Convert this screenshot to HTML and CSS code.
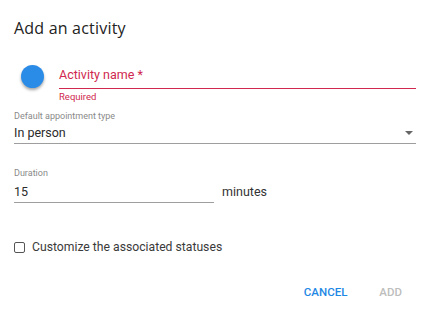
FILE: index.html
```html
<!DOCTYPE html>
<html lang="en">
  <head>
    <meta charset="UTF-8" />
    <title>Add an activity</title>
    <link rel="stylesheet" href="styles.css">
  </head>
  <body>
    <div class="dialog">
      <h2 class="dialog-title">Add an activity</h2>
      <div class="name-row">
        <span class="color-dot"></span>
        <div class="field field-error">
          <div class="field-input">Activity name *</div>
          <div class="field-help">Required</div>
        </div>
      </div>
      <div class="field select-field">
        <label class="field-label">Default appointment type</label>
        <div class="field-input">
          <span>In person</span>
          <span class="caret"></span>
        </div>
      </div>
      <div class="duration-row">
        <div class="field duration-field">
          <label class="field-label">Duration</label>
          <div class="field-input">15</div>
        </div>
        <span class="unit">minutes</span>
      </div>
      <label class="check">
        <span class="check-box"></span>
        Customize the associated statuses
      </label>
      <div class="actions">
        <button class="btn btn-primary">Cancel</button>
        <button class="btn btn-disabled">Add</button>
      </div>
    </div>
  </body>
</html>
```

FILE: styles.css
```css
body {
  margin: 0;
  background-color: #fff;
  font-family: Roboto, Arial, sans-serif;
  color: #2b2b2b;
}

.dialog {
  width: 428px;
  height: 313px;
  padding: 18px 12px 0 14px;
  box-sizing: border-box;
}

.dialog-title {
  margin: 0;
  font-family: "Open Sans", Lato, sans-serif;
  font-size: 16px;
  font-weight: 500;
  letter-spacing: 0.2px;
  color: #222;
  line-height: 20px;
}

.name-row {
  display: flex;
  align-items: flex-start;
  margin-top: 27px;
}

.color-dot {
  width: 23px;
  height: 23px;
  border-radius: 50%;
  background-color: #2b8ce8;
  box-shadow: 0 2px 3px rgba(0, 0, 0, 0.35);
  margin: 0 15px 0 7px;
  flex-shrink: 0;
}

.field {
  flex: 1;
}

.field-input {
  font-size: 12.5px;
  line-height: 18px;
  padding: 2px 0 4px;
  border-bottom: 1px solid #9e9e9e;
  display: flex;
  justify-content: space-between;
  align-items: center;
}

.field-error .field-input {
  padding: 1px 0 4px;
  color: #d0284f;
  border-bottom-color: #d0284f;
}

.field-help {
  font-size: 9.5px;
  color: #d0284f;
  margin-top: 3px;
  line-height: 10px;
}

.field-label {
  display: block;
  font-size: 9px;
  color: #8a8a8a;
  line-height: 12px;
}

.select-field {
  margin-top: 8px;
}

.select-field .field-input {
  padding: 2px 0 1px;
}

.caret {
  width: 0;
  height: 0;
  border-left: 4px solid transparent;
  border-right: 4px solid transparent;
  border-top: 4px solid #666;
  margin-right: 3px;
}

.duration-row {
  display: flex;
  align-items: flex-end;
  margin-top: 23px;
}

.duration-field {
  flex: 0 0 200px;
}

.duration-field .field-input {
  padding: 4px 0 1px;
}

.unit {
  font-size: 12.5px;
  color: #333;
  margin-left: 8px;
  margin-bottom: 4px;
}

.check {
  display: flex;
  align-items: center;
  margin-top: 37px;
  font-size: 12.2px;
  color: #3a3a3a;
}

.check-box {
  width: 9px;
  height: 9px;
  border: 1.5px solid #555;
  border-radius: 2px;
  margin-right: 7px;
}

.actions {
  display: flex;
  justify-content: flex-end;
  margin-top: 31px;
  padding-right: 2px;
}

.btn {
  background: none;
  border: none;
  font-family: Roboto, Arial, sans-serif;
  font-size: 11.5px;
  font-weight: 500;
  letter-spacing: 0;
  text-transform: uppercase;
  padding: 0;
  cursor: pointer;
}

.btn-primary {
  color: #1e88e5;
  margin-right: 32px;
}

.btn-disabled {
  color: #bdbdbd;
  margin-right: 12px;
}
```
